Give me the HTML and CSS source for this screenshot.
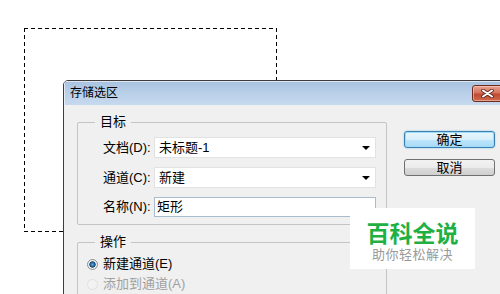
FILE: index.html
```html
<!DOCTYPE html>
<html lang="zh-CN">
<head>
<meta charset="UTF-8">
<meta name="viewport" content="width=device-width, initial-scale=1.0">
<title>存储选区</title>
<link rel="stylesheet" href="styles.css">
</head>
<body>
<div class="canvas">
    <!-- selection marquee on the document -->
    <div class="marquee"></div>

    <!-- Save Selection dialog -->
    <div class="dialog">
        <div class="titlebar">
            <span class="title">存储选区</span>
            <button class="close" title="关闭">
                <svg width="13" height="9" viewBox="0 0 13 9">
                    <path d="M2 1.5 L11 7.5 M11 1.5 L2 7.5" stroke="#5b2418" stroke-width="3.6" stroke-linecap="round"/>
                    <path d="M2 1.5 L11 7.5 M11 1.5 L2 7.5" stroke="#ffffff" stroke-width="2" stroke-linecap="round"/>
                </svg>
            </button>
        </div>

        <div class="dialog-body">
            <div class="groups">
                <fieldset class="group">
                    <legend>目标</legend>
                    <div class="field">
                        <label>文档(D):</label>
                        <div class="select">未标题-1<span class="arrow"></span></div>
                    </div>
                    <div class="field">
                        <label>通道(C):</label>
                        <div class="select">新建<span class="arrow"></span></div>
                    </div>
                    <div class="field">
                        <label>名称(N):</label>
                        <div class="input">矩形</div>
                    </div>
                </fieldset>

                <fieldset class="group">
                    <legend>操作</legend>
                    <div class="option"><span class="radio checked"></span>新建通道(E)</div>
                    <div class="option disabled"><span class="radio"></span>添加到通道(A)</div>
                </fieldset>
            </div>

            <div class="actions">
                <button class="btn btn-default">确定</button>
                <button class="btn">取消</button>
            </div>
        </div>
    </div>

    <!-- watermark -->
    <div class="watermark">
        <div class="wm-title">百科全说</div>
        <div class="wm-sub">助你轻松解决</div>
    </div>
</div>
</body>
</html>
```

FILE: styles.css
```css
body {
    margin: 0;
    padding: 0;
    background: #ffffff;
    font-family: "Liberation Sans", "Noto Sans CJK SC", sans-serif;
    font-size: 13px;
    color: #000000;
}

.canvas {
    position: relative;
    width: 500px;
    height: 294px;
    overflow: hidden;
    background: #ffffff;
}

/* marching ants: 4px dash, 3px gap */
.marquee {
    position: absolute;
    left: 24px;
    top: 28px;
    width: 253px;
    height: 204px;
    background:
        repeating-linear-gradient(90deg, #000 0 4px, transparent 4px 7px) top / 100% 1px no-repeat,
        repeating-linear-gradient(90deg, #000 0 4px, transparent 4px 7px) bottom / 100% 1px no-repeat,
        repeating-linear-gradient(180deg, #000 0 4px, transparent 4px 7px) left / 1px 100% no-repeat,
        repeating-linear-gradient(180deg, #000 0 4px, transparent 4px 7px) right / 1px 100% no-repeat;
}

/* Dialog window */
.dialog {
    position: absolute;
    left: 63px;
    top: 80px;
    width: 447px;
    height: 240px;
    box-sizing: border-box;
    border: 1px solid #3d3d3d;
    border-radius: 5px 5px 0 0;
    background: #f0f0f0;
    overflow: hidden;
}

.titlebar {
    display: flex;
    align-items: center;
    height: 24px;
    padding: 0 6px;
    background: linear-gradient(#a8c2e0, #bcd2ea 60%, #c6d9ee);
    box-shadow: inset 1px 1px 0 rgba(255, 255, 255, 0.6);
}

.title {
    font-size: 12px;
    line-height: 16px;
}

.close {
    margin-left: auto;
    width: 31px;
    height: 17px;
    padding: 0;
    border: 1px solid #6e2c20;
    border-radius: 3px;
    background: linear-gradient(#e9a593, #d5735d 45%, #c04a31 55%, #cf6a4e);
    box-shadow: inset 0 0 0 1px rgba(255, 220, 210, 0.5);
    display: flex;
    align-items: center;
    justify-content: center;
}

.dialog-body {
    display: flex;
    align-items: flex-start;
    padding: 9px 0 0 13px;
}

.groups {
    display: flex;
    flex-direction: column;
    gap: 9px;
}

.group {
    width: 310px;
    box-sizing: border-box;
    margin: 0;
    padding: 0 10px 7px 9px;
    border: 1px solid #c4c4c4;
    border-radius: 2px;
}

.group legend {
    margin-left: 8px;
    padding: 0 5px;
    font-size: 13px;
    line-height: 16px;
}

.field {
    display: flex;
    align-items: center;
    height: 21px;
    margin: 0 0 9px 16px;
}

.field:first-of-type {
    margin-top: 7px;
}

.field:last-child {
    height: 20px;
    margin-bottom: 0;
}

.field label {
    width: 51px;
    flex: none;
    line-height: 16px;
    white-space: nowrap;
}

.select, .input {
    position: relative;
    width: 222px;
    height: 100%;
    box-sizing: border-box;
    padding-left: 4px;
    background: #ffffff;
    border: 1px solid #e2e2e2;
    line-height: 19px;
}

.input {
    border-color: #a9bccd;
    line-height: 18px;
    padding-left: 2px;
}

/* dropdown triangle, sits over the select's right end */
.arrow {
    position: absolute;
    right: 5px;
    top: 8px;
    width: 0;
    height: 0;
    border-left: 4px solid transparent;
    border-right: 4px solid transparent;
    border-top: 4px solid #000000;
}

.option {
    display: flex;
    align-items: center;
    height: 20px;
    line-height: 20px;
}

.option:first-of-type {
    margin-top: 4px;
}

.option.disabled {
    color: #a0a0a0;
}

.radio {
    width: 11px;
    height: 11px;
    margin-right: 5px;
    box-sizing: border-box;
    border-radius: 50%;
    border: 1px solid #c8c8c8;
    background: radial-gradient(circle at 40% 35%, #ffffff, #e6e6e6);
}

.radio.checked {
    border-color: #8e8f8f;
    background: radial-gradient(circle, #6fb3e8 0, #2a6aa6 28%, #17456e 45%, #f4f4f4 55%, #dadada 100%);
}

.option.disabled .radio {
    border-color: #e0e0e0;
    background: #f3f3f3;
}

/* Buttons */
.actions {
    display: flex;
    flex-direction: column;
    gap: 11px;
    margin: 17px 0 0 17px;
}

.btn {
    width: 91px;
    height: 17px;
    padding: 0;
    font-family: "Liberation Sans", "Noto Sans CJK SC", sans-serif;
    font-size: 13px;
    line-height: 15px;
    color: #000000;
    border: 1px solid #707070;
    border-radius: 3px;
    background: linear-gradient(#f2f2f2, #ebebeb 50%, #dddddd 51%, #cfcfcf);
}

.btn-default {
    border-color: #3c7fb1;
    background: linear-gradient(#e8f6fd, #d8effb 50%, #bee6fd 51%, #a7d9f5);
    box-shadow: 0 0 2px #7ec4ec, inset 0 0 0 1px #9fdcf8;
}

/* Watermark */
.watermark {
    position: absolute;
    left: 350px;
    top: 208px;
    width: 125px;
    height: 61px;
    background: #ffffff;
    text-align: center;
}

.wm-title {
    margin-top: 13px;
    font-family: "Noto Sans CJK SC", sans-serif;
    font-size: 23px;
    font-weight: 700;
    line-height: 22px;
    color: #1fb043;
}

.wm-sub {
    margin-top: 3px;
    font-family: "Noto Sans CJK SC", sans-serif;
    font-size: 13px;
    line-height: 15px;
    color: #9a9a9a;
    letter-spacing: 0.5px;
}
```
